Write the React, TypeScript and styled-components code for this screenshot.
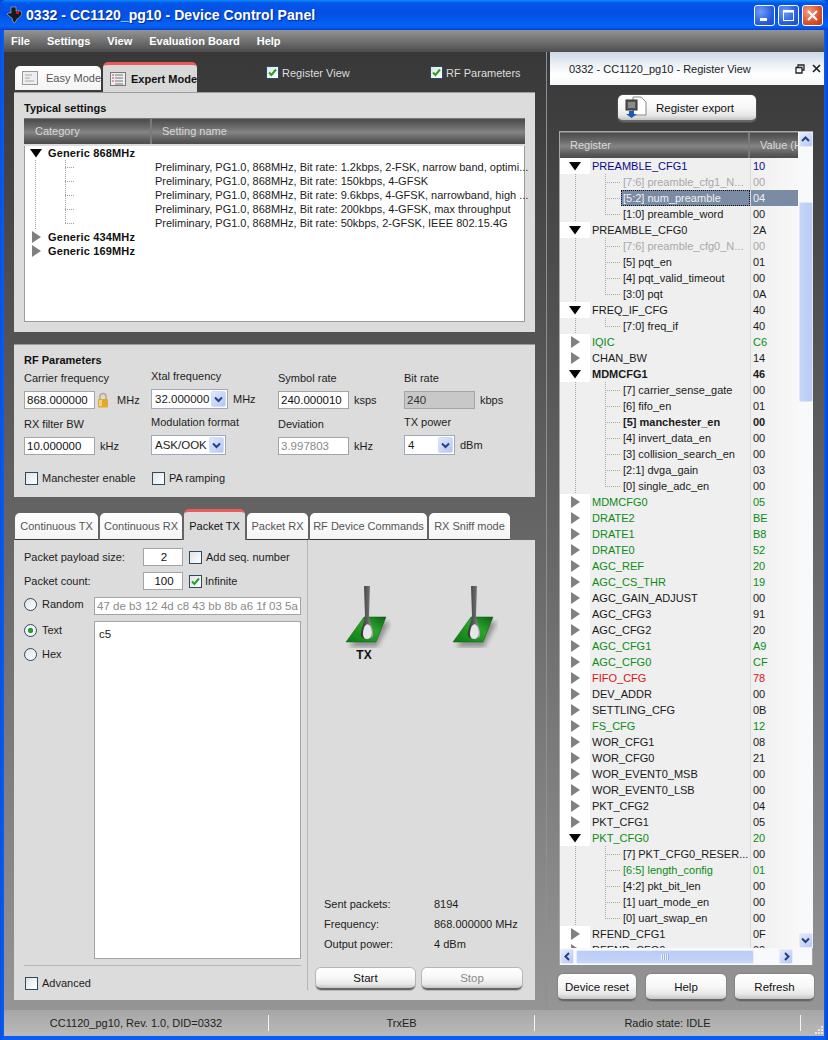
import React from "react";
import styled, { createGlobalStyle } from "styled-components";

const Global = createGlobalStyle`
  html, body { margin: 0; padding: 0; background: #0a46d0; }
  body { font: 11px "Liberation Sans", Arial, sans-serif; color: #1c1c1c; overflow: hidden; }
  * { box-sizing: border-box; }
`;

const Win = styled.div`
  width: 828px; height: 1040px; display: flex; flex-direction: column;
  background: linear-gradient(90deg, #0a50e4 0, #0b5cf0 4px, #0b5cf0 824px, #0a46d0 100%);
  padding: 0 4px 4px; overflow: hidden; border-radius: 6px 6px 0 0;
`;
const TitleBar = styled.div`
  height: 30px; margin: 0 -4px; padding: 0 5px 0 6px; display: flex; align-items: center;
  background: linear-gradient(180deg, #0a8cf8 0, #0555ea 10%, #0350e4 45%, #0562f6 85%, #0558ee 92%, #0340d0 100%);
`;
const TitleText = styled.div`
  margin-left: 3px; font: bold 14px "Liberation Sans", Arial, sans-serif; letter-spacing: 0.05px;
  color: #fff; text-shadow: 1px 1px 1px #0a2a90; white-space: nowrap;
`;
const WinButtons = styled.div`
  margin-left: auto; display: flex; gap: 3px; padding-top: 1px;
`;
const WinBtn = styled.div<{ $close?: boolean }>`
  width: 21px; height: 21px; border-radius: 3px; border: 1px solid #fff; display: flex; align-items: center; justify-content: center;
  background: ${p => p.$close
    ? "radial-gradient(circle at 30% 30%, #f0a080, #d8502a 60%, #b83a1a)"
    : "radial-gradient(circle at 30% 30%, #6f9cf6, #2a5fe0 60%, #1a48c8)"};
`;
const MenuBar = styled.div`
  height: 22px; display: flex; align-items: center; padding-left: 7px; gap: 17px;
  background: linear-gradient(180deg, #949494, #757575 45%, #4d4d4d);
  color: #fff; font-weight: bold; font-size: 11px;
`;
const Main = styled.div`
  flex: 1; display: flex; min-height: 0;
  background: linear-gradient(180deg, #383838 0, #6a6a6a 55%, #959595 100%);
`;
const LeftPane = styled.div`
  width: 543px; padding-left: 10px; display: flex; flex-direction: column; border-right: 1px solid #8a8f98;
`;
const TopRow = styled.div`
  height: 40px; width: 523px; display: flex; align-items: flex-end; overflow: hidden; flex: none;
`;
const ModeTab = styled.div<{ $active?: boolean }>`
  display: flex; align-items: center; gap: 8px; font-size: 11px; white-space: nowrap;
  border-radius: 5px 5px 0 0; padding-left: 7px;
  ${p => p.$active ? `
    width: 104px; height: 30px; margin-left: 2px; color: #111; font-weight: bold; background: #d9d9d9;
    border-top: 3px solid #e85a5a; gap: 5px;
  ` : `
    width: 97px; height: 24px; margin: 0 0 2px 1px; color: #555; background: linear-gradient(180deg, #fff, #f4f4f4);
  `}
`;
const TopChecks = styled.div`
  display: flex; margin-left: 68px; align-self: flex-start; margin-top: 14px; flex: none;
`;
const TopCheck = styled.div`
  width: 164px; display: flex; align-items: center; gap: 3px; color: #ddd; white-space: nowrap; font-size: 11px;
`;
const Panel = styled.div<{ $h: number }>`
  width: 521px; height: ${p => p.$h}px; background: #dcdcdc; flex: none; border-top: 1px solid #9a9a9a;
`;
const Panel1 = styled(Panel)`
  padding: 7px 10px 10px; display: flex; flex-direction: column; gap: 2px;
`;
const PanelTitle = styled.div`
  font-weight: bold; color: #111; height: 16px; line-height: 16px; font-size: 11px;
`;
const TableHead = styled.div`
  display: flex; flex: none; height: 26px; align-items: center; color: #d8d8d8;
  background: linear-gradient(180deg, #8a8a8a 0, #4c4c4c 6%, #6a6a6a 35%, #858585 55%, #5a5a5a 85%, #4c4c4c 100%);
`;
const HeadCell = styled.div<{ $w: number; $pl: number }>`
  width: ${p => p.$w}px; flex: none; height: 100%; display: flex; align-items: center; padding-left: ${p => p.$pl}px;
  border-right: 2px solid #7a7a7a; white-space: nowrap; overflow: hidden;
  &:last-child { border-right: 0; flex: 1; }
`;
const SettingsTable = styled.div`
  flex: 1; background: #fff; border: 1px solid #9c9c9c; border-top: 0; display: flex; flex-direction: column;
`;
const SetRow = styled.div`
  height: 14px; display: flex; align-items: center; white-space: nowrap; flex: none;
`;
const SetArrowCell = styled.div`
  width: 23px; display: flex; align-items: center; justify-content: center; height: 100%; flex: none;
`;
const SetParent = styled.span`
  font-weight: bold; color: #111; font-size: 11px; letter-spacing: 0.15px;
`;
const DotLine = styled.div<{ $last?: boolean; $short?: boolean }>`
  height: 100%; flex: none; width: ${p => p.$short ? 20 : 10}px;
  background-image:
    repeating-linear-gradient(180deg, #9a9a9a 0 1px, transparent 1px 2px);
  background-size: 1px ${p => p.$last ? "50%" : "100%"};
  background-repeat: no-repeat;
  background-position: ${p => p.$short ? "10px" : "0"} 0;
`;
const Elbow = styled.div<{ $last?: boolean }>`
  width: 30px; height: 100%; flex: none; position: relative;
  &::before { content: ""; position: absolute; left: 0; top: 0; width: 1px; height: ${p => p.$last ? "50%" : "100%"};
    background: repeating-linear-gradient(180deg, #a0a0a0 0 1px, transparent 1px 2px); }
  &::after { content: ""; position: absolute; left: 0; top: 50%; width: 10px; height: 1px;
    background: repeating-linear-gradient(90deg, #a0a0a0 0 1px, transparent 1px 2px); }
`;
const SetRail = styled.div`
  width: 11px; margin-right: 19px; height: 100%; flex: none; margin-left: 10px;
  background: repeating-linear-gradient(180deg, #a0a0a0 0 1px, transparent 1px 2px) 0 0 / 1px 100% no-repeat;
`;
const SetRailPad = styled.div`
  flex: none; width: 60px;
`;
const SetText = styled.span`
  color: #1c1c1c;
`;

const RFPanel = styled(Panel)`
  margin-top: 12px; padding: 7px 10px 0;
`;
const RFGrid = styled.div`
  display: grid; grid-template-columns: 127px 127px 126px 1fr; row-gap: 8px; margin-top: 3px;
`;
const RFCell = styled.div<{ $up?: boolean }>`
  display: flex; flex-direction: column; gap: 6px; ${p => p.$up && "margin-top: -2px;"}
`;
const FieldLabel = styled.div`
  height: 14px; line-height: 14px; white-space: nowrap;
`;
const FieldRow = styled.div<{ $gap?: number }>`
  display: flex; align-items: center; gap: ${p => p.$gap ?? 5}px; white-space: nowrap;
`;
const TextBox = styled.div<{ $w?: number; $state?: "dim" | "gray"; $center?: boolean }>`
  width: ${p => p.$w ?? 71}px; height: 18px; flex: none; border: 1px solid #a4a4a4; padding-left: 2px; line-height: 16px;
  font-size: 11.5px; overflow: hidden; white-space: nowrap;
  text-align: ${p => p.$center ? "center" : "left"};
  background: ${p => p.$state === "gray" ? "#c8c8c8" : "#fff"};
  color: ${p => p.$state === "dim" ? "#8a8a8a" : p.$state === "gray" ? "#333" : "#111"};
`;
const Combo = styled.div<{ $w: number }>`
  width: ${p => p.$w}px; height: 20px; flex: none; border: 1px solid #9eaabc; background: #fff; display: flex; align-items: center;
  padding: 0 1px 0 3px; font-size: 11.5px; justify-content: space-between;
`;
const ComboBtn = styled.div`
  width: 15px; height: 16px; border-radius: 2px; background: linear-gradient(135deg, #dfe8fb, #b4c6f2);
  display: flex; align-items: center; justify-content: center; border: 1px solid #d2dcf2;
`;
const ChecksRow = styled.div`
  display: grid; grid-template-columns: 127px 1fr; margin-top: 16px;
`;
const CheckItem = styled.div<{ $gap?: number }>`
  display: flex; align-items: center; gap: ${p => p.$gap ?? 4}px; white-space: nowrap; height: 14px;
`;
const Box = styled.div`
  width: 13px; height: 13px; flex: none; border: 1px solid #2a4a66; background: linear-gradient(135deg, #e0e4e6, #fff); margin-left: 1px;
  display: flex; align-items: center; justify-content: center;
`;
const Radio = styled.div<{ $on?: boolean }>`
  width: 13px; height: 13px; flex: none; border-radius: 50%; border: 1px solid #2a4a66;
  background: ${p => p.$on
    ? "radial-gradient(circle, #2aa02a 0 2.5px, #fff 3px, #e8e8e8 100%)"
    : "linear-gradient(135deg, #dfe3e6, #fff)"};
`;
const TabsRow = styled.div`
  margin-top: 12px; height: 31px; display: flex; align-items: flex-start; gap: 2px; flex: none; padding-left: 1px;
`;
const PageTab = styled.div<{ $w: number; $active?: boolean }>`
  width: ${p => p.$w}px; display: flex; align-items: center; justify-content: center; white-space: nowrap; flex: none;
  border-radius: 5px 5px 0 0; font-size: 11px;
  ${p => p.$active ? `
    height: 31px; background: #dcdcdc; border-top: 3px solid #ea5c5c; color: #111;
  ` : `
    height: 26px; margin-top: 4px; color: #555; background: linear-gradient(180deg, #fff, #f4f4f4);
    box-shadow: 0 1px 0 #333; 
  `}
`;
const PacketPanel = styled(Panel)`
  display: flex; border-top: 0;
`;
const PacketLeft = styled.div`
  width: 294px; padding: 8px 0 0 10px; display: flex; flex-direction: column; border-right: 1px solid #b4b4b4; margin-bottom: 10px;
  flex: none; position: relative;
`;
const PacketRow = styled.div`
  display: flex; align-items: center; height: 18px; margin-bottom: 6px; width: 277px;
`;
const PacketLabel = styled.div`
  width: 119px; flex: none;
`;
const CheckGap = styled.div`
  margin-left: 5px;
`;
const ComposeGrid = styled.div`
  display: grid; grid-template-columns: 70px 207px; row-gap: 6px; margin-top: 1px;
`;
const RadioStack = styled.div`
  display: flex; flex-direction: column; gap: 10px; padding-top: 2px;
`;
const Area = styled.div`
  height: 338px; background: #fff; border: 1px solid #a4a4a4; padding: 6px 4px; font-size: 11.5px;
`;
const Rule = styled.div`
  height: 1px; background: #b4b4b4; margin: 6px 6px 10px 0; width: 277px;
`;
const PacketRight = styled.div`
  flex: 1; display: flex; flex-direction: column; padding: 46px 0 10px 8px;
`;
const Toggles = styled.div`
  display: flex; gap: 53px; padding-left: 21px;
`;
const Toggle = styled.div<{ $off?: boolean }>`
  width: 54px; display: flex; flex-direction: column; align-items: center; font-weight: bold; font-size: 12px;
  color: ${p => p.$off ? "#d6c9cc" : "#111"}; line-height: 14px;
`;
const Stats = styled.div`
  margin-top: auto; display: grid; grid-template-columns: 110px 1fr; grid-auto-rows: 20px; align-items: center; padding-left: 8px; margin-bottom: 14px;
`;
const ActionRow = styled.div`
  display: flex; gap: 7px;
`;
const Btn = styled.div<{ $w: number; $h?: number; $off?: boolean }>`
  width: ${p => p.$w}px; height: ${p => p.$h ?? 22}px; display: flex; align-items: center; justify-content: center; flex: none;
  border-radius: 5px; font-size: 11.5px; color: ${p => p.$off ? "#8a8a8a" : "#111"};
  background: linear-gradient(180deg, #fff 0, #f7f7f7 50%, #e8e8e8 80%, #c4c4c4 100%);
  border-bottom: 2px solid #666; box-shadow: 0 0 0 1px rgba(110,110,110,.35);
`;

const Dock = styled.div`
  width: 274px; margin-left: 3px; display: flex; flex-direction: column;
`;
const DockTitle = styled.div`
  height: 33px; flex: none; display: flex; align-items: center; padding: 0 3px 0 19px; font-size: 11px; color: #222;
  background: linear-gradient(180deg, #cbd8e5 0, #e9eff5 35%, #fff 70%, #f4f6f8 100%);
`;
const DockIcons = styled.div`
  margin-left: auto; display: flex; gap: 7px; align-items: center;
`;
const ExportWrap = styled.div`
  display: flex; justify-content: flex-start; padding: 10px 0 9px 68px; flex: none;
`;
const ExportBtn = styled(Btn)`
  justify-content: flex-start; padding-left: 7px; gap: 9px;
`;
const RegShell = styled.div`
  margin-left: 9px; width: 254px; height: 834px; flex: none; display: flex; flex-direction: column; background: #f7f8fa;
  border: 1px solid #a8a8a8; border-bottom: 0;
`;
const RegUpper = styled.div`
  flex: 1; display: flex; min-height: 0;
`;
const RegView = styled.div`
  width: 238px; flex: none; overflow: hidden; display: flex; flex-direction: column;
`;
const RegRow = styled.div`
  height: 16px; flex: none; display: flex; align-items: center; white-space: nowrap;
  background: #efefef; font-size: 11px;
`;
const ArrowCell = styled.div`
  width: 30px; height: 100%; flex: none; background: #fff; display: flex; align-items: center; justify-content: center;
`;
const RegRail = styled.div`
  width: 30px; height: 100%; flex: none; margin-left: 0;
  background: repeating-linear-gradient(180deg, #a6a6a6 0 1px, transparent 1px 2px) 15px 0 / 1px 100% no-repeat;
`;
const RegElbow = styled.div<{ $last?: boolean }>`
  width: 31px; height: 100%; flex: none; position: relative;
  &::before { content: ""; position: absolute; left: 15px; top: 0; width: 1px; height: ${p => p.$last ? "50%" : "100%"};
    background: repeating-linear-gradient(180deg, #a6a6a6 0 1px, transparent 1px 2px); }
  &::after { content: ""; position: absolute; left: 15px; top: 50%; width: 15px; height: 1px;
    background: repeating-linear-gradient(90deg, #a6a6a6 0 1px, transparent 1px 2px); }
`;
type Tone = "normal" | "blue" | "green" | "red" | "dim" | "sel";
const toneColor: Record<Tone, string> = {
  normal: "#1a1a1a", blue: "#0a0a86", green: "#0c8c14", red: "#d81414", dim: "#a8a8a8", sel: "#f0f2f5",
};
const RegName = styled.div<{ $w: number; $tone: Tone; $bold?: boolean }>`
  width: ${p => p.$w}px; height: 100%; flex: none; padding-left: 2px; line-height: 16px; overflow: hidden;
  color: ${p => toneColor[p.$tone]}; font-weight: ${p => p.$bold ? "bold" : "normal"};
  ${p => p.$tone === "sel" && "background: #7a8ba3; outline: 1px dotted #111; outline-offset: -1px;"}
`;
const RegValue = styled.div<{ $tone: Tone; $bold?: boolean }>`
  flex: 1; height: 100%; line-height: 16px; padding-left: 2px; border-left: 1px solid #d8d8d8;
  color: ${p => toneColor[p.$tone]}; font-weight: ${p => p.$bold ? "bold" : "normal"};
  background: ${p => p.$tone === "sel" ? "#7a8ba3" : "linear-gradient(90deg, #efefef, #f8f8f8)"};
`;
const VScroll = styled.div`
  width: 15px; flex: none; background: #f8f9fb; display: flex; flex-direction: column; align-items: center;
`;
const ScrollBtn = styled.div`
  width: 14px; height: 15px; flex: none; border-radius: 2px; background: linear-gradient(135deg, #e4ecfc, #b6c8f2); border: 1px solid #e6ecf8;
  display: flex; align-items: center; justify-content: center;
`;
const VThumb = styled.div`
  width: 14px; height: 200px; margin-top: 55px; border-radius: 2px; flex: none;
  background: linear-gradient(90deg, #c6d5f8, #b9ccf6); border: 1px solid #dfe7f8;
`;
const VSpacer = styled.div`
  flex: 1;
`;
const HScroll = styled.div`
  height: 17px; flex: none; display: flex; align-items: center; background: #f8f9fb; padding-right: 20px;
`;
const HThumb = styled.div`
  width: 178px; height: 14px; margin: 0 25px 0 2px; border-radius: 2px; background: linear-gradient(180deg, #b9ccf6, #c6d5f8); border: 1px solid #e6ecf8;
  display: flex; align-items: center; justify-content: center; flex: none;
`;
const Grip = styled.div`
  width: 8px; height: 6px; background: repeating-linear-gradient(90deg, #eef2fb 0 1px, #9db2e2 1px 2px);
`;
const DockButtons = styled.div`
  display: flex; margin: 9px 0 0 8px; gap: 10px;
`;
const DockBtn = styled(Btn)`
  margin-right: ${p => (p.$w === 80 ? "-1px" : "0")};
`;

const StatusBar = styled.div`
  height: 26px; flex: none; display: grid; grid-template-columns: 265px 266px 266px 1fr; align-items: center;
  background: linear-gradient(180deg, #a6a6a6, #bababa); font-size: 11px; color: #222;
`;
const StatusCell = styled.div`
  text-align: center; height: 16px; line-height: 16px; border-right: 1px solid #f4f4f4;
`;
const GripCell = styled.div`
  align-self: end; justify-self: end; display: flex;
`;

const Triangle = ({ open }: { open: boolean }) =>
  open ? (
    <svg width="13" height="9" viewBox="0 0 13 9"><path d="M0 0H12L6 8.5Z" fill="#050505" /></svg>
  ) : (
    <svg width="9" height="12" viewBox="0 0 9 12"><path d="M0 0L9 6L0 12Z" fill="#808080" /></svg>
  );

const Check = () => (
  <svg width="9" height="9" viewBox="0 0 9 9"><path d="M1 4.5L3.4 7L8 1.5" stroke="#22a22a" strokeWidth="2" fill="none" /></svg>
);
const Chevron = ({ dir = "down" }: { dir?: "down" | "up" | "left" | "right" }) => {
  const paths = { down: "M1 2.5L4.5 6L8 2.5", up: "M1 6L4.5 2.5L8 6", left: "M6 1L2.5 4.5L6 8", right: "M3 1L6.5 4.5L3 8" };
  return <svg width="9" height="9" viewBox="0 0 9 9"><path d={paths[dir]} stroke="#24408a" strokeWidth="2" fill="none" /></svg>;
};
const TILogo = () => (
  <svg width="17" height="18" viewBox="0 0 17 18">
    <path d="M5 1h5v4h5l1 3-3 4-2 1-2 4-2-1-1-4-3-2-2-2 1-1 3 0z" fill="#1a1a1a" stroke="#c8d8f0" strokeWidth=".5" />
    <path d="M10 5h3v3h-3z" fill="#c21818" />
  </svg>
);
const EasyIcon = () => (
  <svg width="16" height="14" viewBox="0 0 16 14">
    <rect x=".5" y=".5" width="15" height="13" fill="#eee" stroke="#999" />
    <path d="M3 4h7M3 7h5M3 10h9" stroke="#aaa" />
  </svg>
);
const ExpertIcon = () => (
  <svg width="16" height="14" viewBox="0 0 16 14">
    <rect x=".5" y=".5" width="15" height="13" fill="#eee" stroke="#777" />
    <path d="M5 3h8M5 6h8M5 9h8M5 12h8" stroke="#777" />
    <path d="M2 3h2M2 6h2M2 9h2" stroke="#c44" />
  </svg>
);
const Lock = () => (
  <svg width="12" height="16" viewBox="0 0 12 16">
    <path d="M3 7V4.500a3 3 0 0 1 6 0V7" stroke="#b0a890" strokeWidth="1.500" fill="none" />
    <rect x="1" y="7" width="10" height="8.500" rx="1" fill="#e2a92e" />
    <rect x="2" y="8" width="3" height="6" fill="#f4d070" />
  </svg>
);
const ExportIcon = () => (
  <svg width="22" height="23" viewBox="0 0 22 23">
    <path d="M8 1h8l5 5v13H8z" fill="#fff" stroke="#888" />
    <rect x="1" y="4" width="11" height="10" fill="#555" stroke="#333" />
    <rect x="3" y="6" width="7" height="6" fill="#8a8a8a" />
    <path d="M4 15h5v3h3l-5.500 4L1 18h3z" fill="#1c58b8" />
  </svg>
);
const Lever = ({ id }: { id: string }) => (
  <svg width="54" height="62" viewBox="0 0 54 62">
    <defs>
      <filter id={`${id}b`}><feGaussianBlur stdDeviation="2.5" /></filter>
      <linearGradient id={`${id}g`} x1="0" y1="1" x2="1" y2="0">
        <stop offset="0" stopColor="#0a7a12" />
        <stop offset=".6" stopColor="#2aa52a" />
        <stop offset="1" stopColor="#0f5f14" />
      </linearGradient>
      <linearGradient id={`${id}m`} x1="0" y1="0" x2="1" y2="0">
        <stop offset="0" stopColor="#333" />
        <stop offset=".6" stopColor="#666" />
        <stop offset="1" stopColor="#aaa" />
      </linearGradient>
    </defs>
    <path d="M31 36H53L40 61H12Z" fill="#000" opacity=".35" filter={`url(#${id}b)`} />
    <path d="M49 31H27L9 56H39Z" fill={`url(#${id}g)`} stroke="#0a5a10" strokeWidth=".5" />
    <path d="M27 0H33L32 30C33 38 37 44 36 50C35 54 25 54 24 50C23 44 27 38 28 30Z" fill={`url(#${id}m)`} />
    <path d="M27 42C29 37 32 37 34 42C36 48 34 53 30 53C26 53 25 48 27 42Z" fill="#e6e6e6" />
  </svg>
);

type Child = { n: string; v: string; tone?: Tone; bold?: boolean };
type Reg = { n: string; v: string; tone?: Tone; bold?: boolean; kids?: Child[] };
const regs: Reg[] = [
  { n: "PREAMBLE_CFG1", v: "10", tone: "blue", kids: [
    { n: "[7:6] preamble_cfg1_N...", v: "00", tone: "dim" },
    { n: "[5:2] num_preamble", v: "04", tone: "sel" },
    { n: "[1:0] preamble_word", v: "00" },
  ] },
  { n: "PREAMBLE_CFG0", v: "2A", kids: [
    { n: "[7:6] preamble_cfg0_N...", v: "00", tone: "dim" },
    { n: "[5] pqt_en", v: "01" },
    { n: "[4] pqt_valid_timeout", v: "00" },
    { n: "[3:0] pqt", v: "0A" },
  ] },
  { n: "FREQ_IF_CFG", v: "40", kids: [{ n: "[7:0] freq_if", v: "40" }] },
  { n: "IQIC", v: "C6", tone: "green" },
  { n: "CHAN_BW", v: "14" },
  { n: "MDMCFG1", v: "46", bold: true, kids: [
    { n: "[7] carrier_sense_gate", v: "00" },
    { n: "[6] fifo_en", v: "01" },
    { n: "[5] manchester_en", v: "00", bold: true },
    { n: "[4] invert_data_en", v: "00" },
    { n: "[3] collision_search_en", v: "00" },
    { n: "[2:1] dvga_gain", v: "03" },
    { n: "[0] single_adc_en", v: "00" },
  ] },
  { n: "MDMCFG0", v: "05", tone: "green" },
  { n: "DRATE2", v: "BE", tone: "green" },
  { n: "DRATE1", v: "B8", tone: "green" },
  { n: "DRATE0", v: "52", tone: "green" },
  { n: "AGC_REF", v: "20", tone: "green" },
  { n: "AGC_CS_THR", v: "19", tone: "green" },
  { n: "AGC_GAIN_ADJUST", v: "00" },
  { n: "AGC_CFG3", v: "91" },
  { n: "AGC_CFG2", v: "20" },
  { n: "AGC_CFG1", v: "A9", tone: "green" },
  { n: "AGC_CFG0", v: "CF", tone: "green" },
  { n: "FIFO_CFG", v: "78", tone: "red" },
  { n: "DEV_ADDR", v: "00" },
  { n: "SETTLING_CFG", v: "0B" },
  { n: "FS_CFG", v: "12", tone: "green" },
  { n: "WOR_CFG1", v: "08" },
  { n: "WOR_CFG0", v: "21" },
  { n: "WOR_EVENT0_MSB", v: "00" },
  { n: "WOR_EVENT0_LSB", v: "00" },
  { n: "PKT_CFG2", v: "04" },
  { n: "PKT_CFG1", v: "05" },
  { n: "PKT_CFG0", v: "20", tone: "green", kids: [
    { n: "[7] PKT_CFG0_RESER...", v: "00" },
    { n: "[6:5] length_config", v: "01", tone: "green" },
    { n: "[4:2] pkt_bit_len", v: "00" },
    { n: "[1] uart_mode_en", v: "00" },
    { n: "[0] uart_swap_en", v: "00" },
  ] },
  { n: "RFEND_CFG1", v: "0F" },
  { n: "RFEND_CFG0", v: "00" },
];

const settings = [
  "Preliminary, PG1.0, 868MHz, Bit rate: 1.2kbps, 2-FSK, narrow band, optimi...",
  "Preliminary, PG1.0, 868MHz, Bit rate: 150kbps, 4-GFSK",
  "Preliminary, PG1.0, 868MHz, Bit rate: 9.6kbps, 4-GFSK, narrowband, high ...",
  "Preliminary, PG1.0, 868MHz, Bit rate: 200kbps, 4-GFSK, max throughput",
  "Preliminary, PG1.0, 868MHz, Bit rate: 50kbps, 2-GFSK, IEEE 802.15.4G",
];

export default function App() {
  return (
    <Win>
      <Global />
      <TitleBar>
        <TILogo />
        <TitleText>0332 - CC1120_pg10 - Device Control Panel</TitleText>
        <WinButtons>
          <WinBtn><svg width="13" height="13" viewBox="0 0 13 13"><rect x="2" y="9" width="7" height="3" fill="#fff" /></svg></WinBtn>
          <WinBtn><svg width="13" height="13" viewBox="0 0 13 13"><rect x="1.500" y="2.500" width="10" height="9" fill="none" stroke="#fff" /><rect x="1" y="1" width="11" height="2.500" fill="#fff" /></svg></WinBtn>
          <WinBtn $close><svg width="13" height="13" viewBox="0 0 13 13"><path d="M2 2L11 11M11 2L2 11" stroke="#fff" strokeWidth="2.200" /></svg></WinBtn>
        </WinButtons>
      </TitleBar>
      <MenuBar>
        <span>File</span><span>Settings</span><span>View</span><span>Evaluation Board</span><span>Help</span>
      </MenuBar>
      <Main>
        <LeftPane>
          <TopRow>
            <ModeTab><EasyIcon />Easy Mode</ModeTab>
            <ModeTab $active><ExpertIcon />Expert Mode</ModeTab>
            <TopChecks>
              <TopCheck><Box><Check /></Box>Register View</TopCheck>
              <TopCheck><Box><Check /></Box>RF Parameters</TopCheck>
            </TopChecks>
          </TopRow>
          <Panel1 $h={240}>
            <PanelTitle>Typical settings</PanelTitle>
            <TableHead>
              <HeadCell $w={128} $pl={11}>Category</HeadCell>
              <HeadCell $w={373} $pl={10}>Setting name</HeadCell>
            </TableHead>
            <SettingsTable>
              <SetRow><SetArrowCell><Triangle open /></SetArrowCell><SetParent>Generic 868MHz</SetParent></SetRow>
              {settings.map((s, i) => (
                <SetRow key={s}>
                  <SetRail />
                  <Elbow $last={i === settings.length - 1} />
                  <SetRailPad />
                  <SetText>{s}</SetText>
                </SetRow>
              ))}
              <SetRow><SetArrowCell><Triangle open={false} /></SetArrowCell><SetParent>Generic 434MHz</SetParent></SetRow>
              <SetRow><SetArrowCell><Triangle open={false} /></SetArrowCell><SetParent>Generic 169MHz</SetParent></SetRow>
            </SettingsTable>
          </Panel1>

          <RFPanel $h={153}>
            <PanelTitle>RF Parameters</PanelTitle>
            <RFGrid>
              <RFCell>
                <FieldLabel>Carrier frequency</FieldLabel>
                <FieldRow $gap={2}><TextBox>868.000000</TextBox><Lock /><span>&nbsp;&nbsp;MHz</span></FieldRow>
              </RFCell>
              <RFCell $up>
                <FieldLabel>Xtal frequency</FieldLabel>
                <FieldRow><Combo $w={77}>32.000000<ComboBtn><Chevron /></ComboBtn></Combo>MHz</FieldRow>
              </RFCell>
              <RFCell>
                <FieldLabel>Symbol rate</FieldLabel>
                <FieldRow><TextBox>240.000010</TextBox>ksps</FieldRow>
              </RFCell>
              <RFCell>
                <FieldLabel>Bit rate</FieldLabel>
                <FieldRow><TextBox $state="gray">240</TextBox>kbps</FieldRow>
              </RFCell>
              <RFCell>
                <FieldLabel>RX filter BW</FieldLabel>
                <FieldRow><TextBox>10.000000</TextBox>kHz</FieldRow>
              </RFCell>
              <RFCell $up>
                <FieldLabel>Modulation format</FieldLabel>
                <FieldRow><Combo $w={75}>ASK/OOK<ComboBtn><Chevron /></ComboBtn></Combo></FieldRow>
              </RFCell>
              <RFCell>
                <FieldLabel>Deviation</FieldLabel>
                <FieldRow><TextBox $state="dim">3.997803</TextBox>kHz</FieldRow>
              </RFCell>
              <RFCell $up>
                <FieldLabel>TX power</FieldLabel>
                <FieldRow><Combo $w={51}>4<ComboBtn><Chevron /></ComboBtn></Combo>dBm</FieldRow>
              </RFCell>
            </RFGrid>
            <ChecksRow>
              <CheckItem><Box />Manchester enable</CheckItem>
              <CheckItem><Box />PA ramping</CheckItem>
            </ChecksRow>
          </RFPanel>

          <TabsRow>
            <PageTab $w={83}>Continuous TX</PageTab>
            <PageTab $w={82}>Continuous RX</PageTab>
            <PageTab $w={61} $active>Packet TX</PageTab>
            <PageTab $w={61}>Packet RX</PageTab>
            <PageTab $w={117}>RF Device Commands</PageTab>
            <PageTab $w={81}>RX Sniff mode</PageTab>
          </TabsRow>
          <PacketPanel $h={460}>
            <PacketLeft>
              <PacketRow>
                <PacketLabel>Packet payload size:</PacketLabel>
                <TextBox $w={40} $center>2</TextBox>
                <CheckGap><CheckItem><Box />Add seq. number</CheckItem></CheckGap>
              </PacketRow>
              <PacketRow>
                <PacketLabel>Packet count:</PacketLabel>
                <TextBox $w={40} $center>100</TextBox>
                <CheckGap><CheckItem $gap={3}><Box><Check /></Box>Infinite</CheckItem></CheckGap>
              </PacketRow>
              <ComposeGrid>
                <CheckItem $gap={5}><Radio />Random</CheckItem>
                <TextBox $w={207} $state="dim">47 de b3 12 4d c8 43 bb 8b a6 1f 03 5a 7c</TextBox>
                <RadioStack>
                  <CheckItem $gap={5}><Radio $on />Text</CheckItem>
                  <CheckItem $gap={5}><Radio />Hex</CheckItem>
                </RadioStack>
                <Area>c5</Area>
              </ComposeGrid>
              <Rule />
              <CheckItem><Box />Advanced</CheckItem>
            </PacketLeft>
            <PacketRight>
              <Toggles>
                <Toggle><Lever id="tx" />TX</Toggle>
                <Toggle $off><Lever id="rx" /></Toggle>
              </Toggles>
              <Stats>
                <span>Sent packets:</span><span>8194</span>
                <span>Frequency:</span><span>868.000000 MHz</span>
                <span>Output power:</span><span>4 dBm</span>
              </Stats>
              <ActionRow>
                <Btn $w={99}>Start</Btn>
                <Btn $w={100} $off>Stop</Btn>
              </ActionRow>
            </PacketRight>
          </PacketPanel>
        </LeftPane>

        <Dock>
          <DockTitle>
            0332 - CC1120_pg10 - Register View
            <DockIcons>
              <svg width="10" height="10" viewBox="0 0 10 10"><path d="M3 3V1H9V6H7M1 3.500H7V9H1Z" fill="none" stroke="#222" strokeWidth="1.300" /></svg>
              <svg width="9" height="9" viewBox="0 0 9 9"><path d="M1 1L8 8M8 1L1 8" stroke="#222" strokeWidth="1.700" /></svg>
            </DockIcons>
          </DockTitle>
          <ExportWrap>
            <ExportBtn $w={138} $h={27}><ExportIcon />Register export</ExportBtn>
          </ExportWrap>
          <RegShell>
            <RegUpper>
              <RegView>
                <TableHead>
                  <HeadCell $w={190} $pl={10}>Register</HeadCell>
                  <HeadCell $w={50} $pl={10}>Value (Hex)</HeadCell>
                </TableHead>
                {regs.map(r => (
                  <React.Fragment key={r.n}>
                    <RegRow>
                      <ArrowCell><Triangle open={!!r.kids} /></ArrowCell>
                      <RegName $w={160} $tone={r.tone ?? "normal"} $bold={r.bold}>{r.n}</RegName>
                      <RegValue $tone={r.tone ?? "normal"} $bold={r.bold}>{r.v}</RegValue>
                    </RegRow>
                    {r.kids?.map((k, i) => (
                      <RegRow key={k.n}>
                        <RegRail />
                        <RegElbow $last={i === r.kids!.length - 1} />
                        <RegName $w={129} $tone={k.tone ?? "normal"} $bold={k.bold}>{k.n}</RegName>
                        <RegValue $tone={k.tone ?? "normal"} $bold={k.bold}>{k.v}</RegValue>
                      </RegRow>
                    ))}
                  </React.Fragment>
                ))}
              </RegView>
              <VScroll>
                <ScrollBtn><Chevron dir="up" /></ScrollBtn>
                <VThumb />
                <VSpacer />
                <ScrollBtn><Chevron /></ScrollBtn>
              </VScroll>
            </RegUpper>
            <HScroll>
              <ScrollBtn><Chevron dir="left" /></ScrollBtn>
              <HThumb><Grip /></HThumb>
              <ScrollBtn><Chevron dir="right" /></ScrollBtn>
            </HScroll>
          </RegShell>
          <DockButtons>
            <DockBtn $w={78} $h={27}>Device reset</DockBtn>
            <DockBtn $w={80} $h={27}>Help</DockBtn>
            <DockBtn $w={79} $h={27}>Refresh</DockBtn>
          </DockButtons>
        </Dock>
      </Main>
      <StatusBar>
        <StatusCell>CC1120_pg10, Rev. 1.0, DID=0332</StatusCell>
        <StatusCell>TrxEB</StatusCell>
        <StatusCell>Radio state: IDLE</StatusCell>
        <GripCell>
          <svg width="12" height="12" viewBox="0 0 12 12"><path d="M9 2h2v2H9zM6 5h2v2H6zM9 5h2v2H9zM3 8h2v2H3zM6 8h2v2H6zM9 8h2v2H9z" fill="#e8e8e8" /></svg>
        </GripCell>
      </StatusBar>
    </Win>
  );
}
